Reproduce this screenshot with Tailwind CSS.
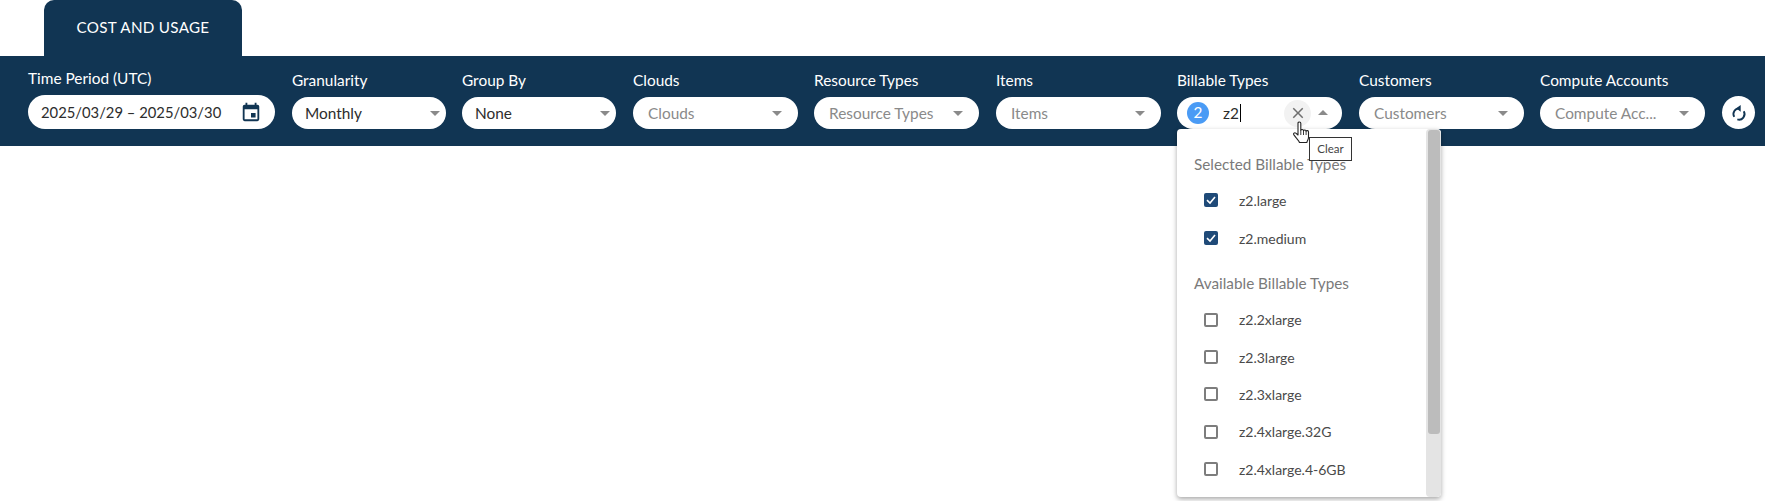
<!DOCTYPE html>
<html lang="en">
<head>
  <meta charset="UTF-8">
  <title>Cost and Usage</title>
  <script src="https://cdn.jsdelivr.net/npm/@tailwindcss/browser@4"></script>
</head>
<body class="bg-white font-['Lato',sans-serif] h-[501px] overflow-hidden relative">

  <!-- Tabs -->
  <div class="h-[56px] pl-[44px] flex items-end">
    <div class="w-[198px] h-[56px] bg-[#113553] rounded-t-[10px] text-white text-[15.2px] tracking-[0.3px] flex items-center justify-center pb-[2px]">COST AND USAGE</div>
  </div>

  <!-- Filter bar -->
  <div class="h-[90px] bg-[#113553] pl-[28px] flex items-start text-[15.4px]">
    <div class="w-[247px] pt-[12px]">
      <div class="text-white h-[20px] leading-[20px]">Time Period (UTC)</div>
      <div class="mt-[7px] h-[34px] bg-white rounded-full pl-[13px] pr-[13px] flex items-center justify-between text-[#2d2d2d] text-[14.8px]">
        <span>2025/03/29 – 2025/03/30</span>
        <svg class="w-[22px] h-[22px]" viewBox="0 0 24 24" fill="#113553"><path d="M19 4h-1V2h-2v2H8V2H6v2H5a2 2 0 0 0-2 2v14a2 2 0 0 0 2 2h14a2 2 0 0 0 2-2V6a2 2 0 0 0-2-2zm0 16H5V9h14v11zm-7-7h5v5h-5z"/></svg>
      </div>
    </div>

    <div class="w-[154px] ml-[17px] pt-[14px]">
      <div class="text-white h-[20px] leading-[20px]">Granularity</div>
      <div class="mt-[7px] h-[32px] bg-white rounded-full pl-[13px] pr-[1px] flex items-center justify-between text-[#2d2d2d]">
        <span class="pt-[1px]">Monthly</span>
        <svg class="w-[20px] h-[20px]" viewBox="0 0 20 20" fill="#8a8a8a"><path d="M5 8h10l-5 5z"/></svg>
      </div>
    </div>

    <div class="w-[154px] ml-[16px] pt-[14px]">
      <div class="text-white h-[20px] leading-[20px]">Group By</div>
      <div class="mt-[7px] h-[32px] bg-white rounded-full pl-[13px] pr-[1px] flex items-center justify-between text-[#2d2d2d]">
        <span class="pt-[1px]">None</span>
        <svg class="w-[20px] h-[20px]" viewBox="0 0 20 20" fill="#8a8a8a"><path d="M5 8h10l-5 5z"/></svg>
      </div>
    </div>

    <div class="w-[165px] ml-[17px] pt-[14px]">
      <div class="text-white h-[20px] leading-[20px]">Clouds</div>
      <div class="mt-[7px] h-[32px] bg-white rounded-full pl-[15px] pr-[11px] flex items-center justify-between text-[#8a8a8a]">
        <span class="pt-[1px]">Clouds</span>
        <svg class="w-[20px] h-[20px]" viewBox="0 0 20 20" fill="#8a8a8a"><path d="M5 8h10l-5 5z"/></svg>
      </div>
    </div>

    <div class="w-[165px] ml-[16px] pt-[14px]">
      <div class="text-white h-[20px] leading-[20px]">Resource Types</div>
      <div class="mt-[7px] h-[32px] bg-white rounded-full pl-[15px] pr-[11px] flex items-center justify-between text-[#8a8a8a]">
        <span class="pt-[1px]">Resource Types</span>
        <svg class="w-[20px] h-[20px]" viewBox="0 0 20 20" fill="#8a8a8a"><path d="M5 8h10l-5 5z"/></svg>
      </div>
    </div>

    <div class="w-[165px] ml-[17px] pt-[14px]">
      <div class="text-white h-[20px] leading-[20px]">Items</div>
      <div class="mt-[7px] h-[32px] bg-white rounded-full pl-[15px] pr-[11px] flex items-center justify-between text-[#8a8a8a]">
        <span class="pt-[1px]">Items</span>
        <svg class="w-[20px] h-[20px]" viewBox="0 0 20 20" fill="#8a8a8a"><path d="M5 8h10l-5 5z"/></svg>
      </div>
    </div>

    <div class="w-[165px] ml-[16px] pt-[14px]">
      <div class="text-white h-[20px] leading-[20px]">Billable Types</div>
      <div class="mt-[7px] h-[32px] bg-white rounded-full pl-[10px] pr-[15px] flex items-center text-[#2d2d2d]">
        <span class="w-[22px] h-[22px] rounded-full bg-[#4a9bf5] text-white flex items-center justify-center">2</span>
        <span class="ml-[14px] border-r border-black pr-[1px] leading-[18px]">z2</span>
        <span class="ml-auto mr-[1px] w-[27px] h-[27px] rounded-full bg-[#f2f2f2] flex items-center justify-center">
          <svg class="w-[18px] h-[18px]" viewBox="0 0 24 24" fill="#6f6f6f"><path d="M19 6.41 17.59 5 12 10.59 6.41 5 5 6.41 10.59 12 5 17.59 6.41 19 12 13.41 17.59 19 19 17.59 13.41 12z"/></svg>
        </span>
        <svg class="w-[20px] h-[20px] ml-[1px] -mr-[6px]" viewBox="0 0 20 20" fill="#8a8a8a"><path d="M5 12h10l-5-5z"/></svg>
      </div>
    </div>

    <div class="w-[165px] ml-[17px] pt-[14px]">
      <div class="text-white h-[20px] leading-[20px]">Customers</div>
      <div class="mt-[7px] h-[32px] bg-white rounded-full pl-[15px] pr-[11px] flex items-center justify-between text-[#8a8a8a]">
        <span class="pt-[1px]">Customers</span>
        <svg class="w-[20px] h-[20px]" viewBox="0 0 20 20" fill="#8a8a8a"><path d="M5 8h10l-5 5z"/></svg>
      </div>
    </div>

    <div class="w-[165px] ml-[16px] pt-[14px]">
      <div class="text-white h-[20px] leading-[20px]">Compute Accounts</div>
      <div class="mt-[7px] h-[32px] bg-white rounded-full pl-[15px] pr-[11px] flex items-center justify-between text-[#8a8a8a]">
        <span class="pt-[1px]">Compute Acc...</span>
        <svg class="w-[20px] h-[20px]" viewBox="0 0 20 20" fill="#8a8a8a"><path d="M5 8h10l-5 5z"/></svg>
      </div>
    </div>

    <div class="ml-[17px] mt-[40px] w-[33px] h-[33px] rounded-full bg-white flex items-center justify-center">
      <svg class="w-[20px] h-[20px]" viewBox="0 0 18 18" fill="none" stroke="#113553" stroke-width="1.7">
        <path d="M9.500 5A5 5 0 0 0 4.700 12.500"/>
        <path d="M13.300 7.500A5 5 0 0 1 7.500 14.800"/>
        <path d="M10.500 1.800v6L6.500 4.800z" fill="#113553" stroke="none"/>
      </svg>
    </div>
  </div>

  <!-- Billable Types dropdown -->
  <div class="absolute left-[1177px] top-[129px] w-[264px] h-[368px] bg-white rounded-[4px] shadow-[0_2px_5px_rgba(0,0,0,0.35)] text-[14px] text-[#4a4a4a] overflow-hidden">
    <div class="absolute right-0 top-0 bottom-0 w-[15px] bg-[#e4e4e4] rounded-[4px]">
      <div class="mx-auto w-[12px] h-[304px] mt-[1px] bg-[#bcbcbc] rounded-[3px]"></div>
    </div>

    <div class="pl-[17px] pt-[26px] text-[15.3px] leading-[18px] text-[#7a7a7a]">Selected Billable Types</div>
    <div class="mt-[8px]">
      <div class="flex items-center h-[38px] pl-[27px]">
        <span class="w-[14px] h-[14px] rounded-[2px] bg-[#1f4a78] flex items-center justify-center">
          <svg class="w-[12px] h-[12px]" viewBox="0 0 12 12" fill="none" stroke="white" stroke-width="1.6"><path d="M2 6.200 5 9l5-6"/></svg>
        </span>
        <span class="ml-[21px]">z2.large</span>
      </div>
      <div class="flex items-center h-[38px] pl-[27px]">
        <span class="w-[14px] h-[14px] rounded-[2px] bg-[#1f4a78] flex items-center justify-center">
          <svg class="w-[12px] h-[12px]" viewBox="0 0 12 12" fill="none" stroke="white" stroke-width="1.6"><path d="M2 6.200 5 9l5-6"/></svg>
        </span>
        <span class="ml-[21px]">z2.medium</span>
      </div>
    </div>

    <div class="pl-[17px] mt-[17px] text-[15.3px] leading-[18px] text-[#7a7a7a]">Available Billable Types</div>
    <div class="mt-[9px]">
      <div class="flex items-center h-[37.4px] pl-[27px]">
        <span class="w-[14px] h-[14px] rounded-[2px] border-2 border-[#7d7d7d]"></span>
        <span class="ml-[21px]">z2.2xlarge</span>
      </div>
      <div class="flex items-center h-[37.4px] pl-[27px]">
        <span class="w-[14px] h-[14px] rounded-[2px] border-2 border-[#7d7d7d]"></span>
        <span class="ml-[21px]">z2.3large</span>
      </div>
      <div class="flex items-center h-[37.4px] pl-[27px]">
        <span class="w-[14px] h-[14px] rounded-[2px] border-2 border-[#7d7d7d]"></span>
        <span class="ml-[21px]">z2.3xlarge</span>
      </div>
      <div class="flex items-center h-[37.4px] pl-[27px]">
        <span class="w-[14px] h-[14px] rounded-[2px] border-2 border-[#7d7d7d]"></span>
        <span class="ml-[21px]">z2.4xlarge.32G</span>
      </div>
      <div class="flex items-center h-[37.4px] pl-[27px]">
        <span class="w-[14px] h-[14px] rounded-[2px] border-2 border-[#7d7d7d]"></span>
        <span class="ml-[21px]">z2.4xlarge.4-6GB</span>
      </div>
    </div>
  </div>

  <!-- Tooltip -->
  <div class="absolute left-[1309px] top-[137px] w-[43px] h-[24px] bg-white border border-[#333] text-[11.5px] text-[#444] flex items-center justify-center">Clear</div>

  <!-- Hand cursor -->
  <svg class="absolute left-[1293px] top-[121px] w-[19px] h-[25px]" viewBox="0 0 19 25" fill="white" stroke="#222" stroke-width="1.1" stroke-linejoin="round">
    <path d="M5 2.200c0-1.700 2.800-1.700 2.800 0v7.300c.3-1.300 2.600-1.300 2.700.3.300-1.200 2.500-1.100 2.600.4.400-1 2.400-.8 2.400.7v5.300c0 2.400-1.200 3.300-1.700 5.300H6.500c-.6-2-2-3-3.500-4.800L.9 13.900c-.9-1.300.6-2.800 1.900-1.800L5 14z"/>
    <path d="M7.800 9.500V14M10.500 9.800V14M13.100 10.200V14" fill="none" stroke-width="0.9"/>
  </svg>

</body>
</html>
